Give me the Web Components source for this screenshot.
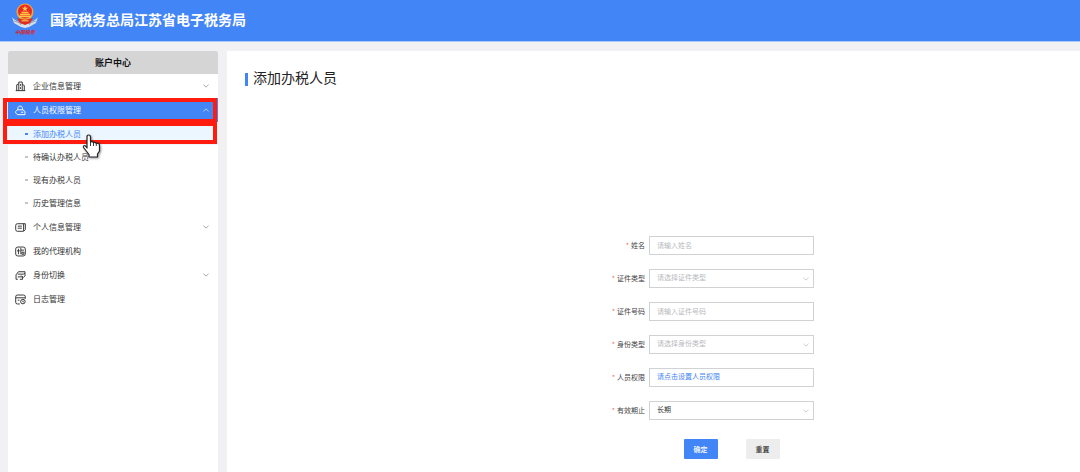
<!DOCTYPE html>
<html lang="zh-CN">
<head>
<meta charset="utf-8">
<title>国家税务总局江苏省电子税务局</title>
<style>
html, body { margin: 0; }
body { font-family: "Noto Sans CJK SC", sans-serif; font-size: 8px; color: #333; }
</style>
</head>
<body>
<tax-app></tax-app>
<script>
const define = (name, html, setup) => {
  const template = document.createElement('template');
  template.innerHTML = html;
  customElements.define(name, class extends HTMLElement {
    connectedCallback() {
      if (this.shadowRoot) return;
      const root = this.attachShadow({ mode: 'open' });
      root.append(template.content.cloneNode(true));
      if (setup) setup(this, root);
    }
  });
};

const icons = {
  building: '<path d="M2.500 14V5.500L5.500 4V1.500H10.500V14M5.500 4V14M1 14H15M10.500 5L13.500 6.500V14M8 4.500V7M8 9V11.500"/>',
  users: '<path d="M4 7V5.500C4 .3 11 .3 11 5.500V7M3.500 7H11.500L14.500 9.500V14H3.500L1 11.500V9.500ZM8.500 10.500H12"/>',
  card: '<path d="M3.500 2.500H15V11L12.500 13.500H3.500Q1 13.500 1 11V5Q1 2.500 3.500 2.500ZM12.500 2.500V13M4 6H10M4 9H10"/>',
  agency: '<rect x="1" y="1.500" width="14" height="13" rx="3"/><path d="M5 4V12M3 7H7M8.500 3V12M8.500 6H13M10 9H13V12H10Z"/>',
  swap: '<path d="M5 2.500H14.500V8.500L12 11M4 6H12M5 2.500L1.500 7V13.500H4M4 10H11V13.500H7M9 8L11.500 10.500M14.500 5L12 6"/>',
  log: '<path d="M7 14.500H3.500Q1 14.500 1 12V4Q1 1.500 3.500 1.500H12.500Q15 1.500 15 4V7M1.500 5.500H14.500M4 9H6.500"/><circle cx="11.500" cy="11" r="3.300"/><path d="M11.500 9.500V11.500H12.500"/>'
};

define('chevron-mark', `
<style>
:host { display: block; width: 6px; height: 4px; color: #999; pointer-events: none; }
:host([up]) { transform: rotate(180deg); }
svg { display: block; width: 100%; height: 100%; }
</style>
<svg viewBox="0 0 7 4" fill="none" stroke="currentColor" stroke-width="1"><path d="M.5.5 3.500 3.300 6.500.5"/></svg>`);

define('tax-logo', `
<style>
:host { display: block; width: 26px; }
svg { display: block; width: 26px; height: 25px; }
span { display: flex; justify-content: center; font-size: 5px; line-height: 7px; color: #d5262c; font-weight: 700; font-style: italic; white-space: nowrap; }
</style>
<svg viewBox="0 0 26 25">
  <path d="M0 14Q3 19 13 20Q23 19 26 14L24 20L17 24L13 25L9 24L2 20Z" fill="#d9dfe6"/>
  <path d="M2 18L10 20.500M24 18L16 20.500M4 16L9 22M22 16L17 22" stroke="#8397b5" stroke-width=".8"/>
  <circle cx="13" cy="9" r="8.500" fill="#efa63b"/>
  <circle cx="13" cy="8.500" r="7" fill="#e92b20"/>
  <path d="M13 2.500 13.800 4.800H16L14.200 6.200 14.900 8.500 13 7.100 11.100 8.500 11.800 6.200 10 4.800H12.200Z" fill="#ffd153"/>
  <path d="M8 11.500H18M9.500 9.500H16.500M7 13.500H19" stroke="#ffc545" stroke-width="1.300"/>
  <path d="M5 15 13 17 21 15 18 20 13 22 8 20Z" fill="#df2b20"/>
  <path d="M9.500 17.800H16.500" stroke="#f3bd4c" stroke-width="1.200"/>
</svg>
<span>中国税务</span>`);

define('app-header', `
<style>
:host { display: flex; align-items: center; gap: 12px; height: 42px; padding: 0 12px 3px; box-sizing: border-box; background: #4285f6; border-bottom: 1px solid #a9c8fb; }
h1 { margin: 0; font-size: 14px; line-height: 20px; font-weight: 700; color: #fff; }
</style>
<tax-logo></tax-logo><h1><slot></slot></h1>`);

define('menu-item', `
<style>
:host { display: block; }
a { display: flex; align-items: center; height: 24px; padding: 0 9px 0 7px; gap: 7px; color: #333; text-decoration: none; font-size: 8px; line-height: 12px; }
svg { width: 11px; height: 11px; fill: none; stroke: currentColor; stroke-width: 1.4; }
span { flex: 1; }
:host([open]) a { background: #4285f6; color: #fff; }
:host([open]) chevron-mark { color: #c9dcfc; }
</style>
<a href="#"><svg viewBox="0 0 16 16"></svg><span><slot></slot></span></a>`, (host, root) => {
  root.querySelector('svg').innerHTML = icons[host.getAttribute('icon')];
  if (host.hasAttribute('expandable')) {
    const mark = document.createElement('chevron-mark');
    mark.toggleAttribute('up', host.hasAttribute('open'));
    root.querySelector('a').append(mark);
  }
});

define('sub-item', `
<style>
:host { display: block; }
a { display: flex; align-items: center; height: 23px; padding-left: 17px; gap: 5px; color: #333; text-decoration: none; font-size: 8px; line-height: 12px; }
a::before { content: ""; width: 3px; height: 2px; background: #c4c4c4; }
:host([active]) a { background: #ebf6fe; color: #4285f6; }
:host([active]) a::before { background: #4285f6; }
</style>
<a href="#"><slot></slot></a>`);

define('hand-cursor', `
<style>
:host { display: block; width: 20px; height: 25px; filter: drop-shadow(1px 1px 1px #0006); }
svg { display: block; }
</style>
<svg width="20" height="25" viewBox="0 0 20 25"><path d="M5 14V3Q5 1 6.700 1Q8.500 1 8.500 3V8Q10 7 11.500 8.500Q13 7.800 14.300 9.300Q17.500 8.500 17.500 12V17L15.500 20V23H7V20.500L1.500 13.500Q1 11.500 3 11.500Z" fill="#fff" stroke="#222" stroke-width="1.200" stroke-linejoin="round"/><path d="M8.500 8V12M11.500 8.500V12M14.300 9.300V12" stroke="#222" stroke-width=".9"/></svg>`);

define('side-menu', `
<style>
:host { display: block; background: #fff; border-radius: 2px 2px 0 0; }
h2 { margin: 0; height: 23px; font-size: 9px; line-height: 24px; font-weight: 700; text-align: center; color: #111; background: #d5d5d5; border-radius: 2px 2px 0 0; }
.group { position: relative; }
.sub { padding-bottom: 1px; }
.mark { position: absolute; left: -5px; right: 1px; box-sizing: border-box; border: 4px solid #ff1c0e; pointer-events: none; }
.first { top: 0; height: 25px; }
.second { top: 24px; height: 22px; }
hand-cursor { position: absolute; left: 74px; top: 36px; }
</style>
<h2>账户中心</h2>
<nav aria-label="账户中心">
  <menu-item icon="building" expandable>企业信息管理</menu-item>
  <div class="group">
    <menu-item icon="users" expandable open>人员权限管理</menu-item>
    <div class="sub">
      <sub-item active>添加办税人员</sub-item>
      <sub-item>待确认办税人员</sub-item>
      <sub-item>现有办税人员</sub-item>
      <sub-item>历史管理信息</sub-item>
    </div>
    <div class="mark first"></div>
    <div class="mark second"></div>
    <hand-cursor></hand-cursor>
  </div>
  <menu-item icon="card" expandable>个人信息管理</menu-item>
  <menu-item icon="agency">我的代理机构</menu-item>
  <menu-item icon="swap" expandable>身份切换</menu-item>
  <menu-item icon="log">日志管理</menu-item>
</nav>`);

define('form-field', `
<style>
:host { display: grid; grid-template-columns: 152px 165px; gap: 4px; align-items: center; font-size: 7px; }
label { text-align: right; line-height: 12px; padding-bottom: 2px; color: #444; }
label::before { content: "*"; color: #f56c6c; margin-right: 2px; }
.box { display: grid; align-items: center; }
.box > * { grid-area: 1 / 1; }
input, select, button { appearance: none; box-sizing: border-box; width: 100%; height: 19px; margin: 0; padding: 0 7px 2px; border: 1px solid #d0d2d4; border-radius: 0; background: #fff; color: #333; font: inherit; line-height: 15px; text-align: left; outline: 0; }
input::placeholder { color: #b8babd; opacity: 1; }
select.empty { color: #b8babd; }
button { color: #4285f6; }
chevron-mark { justify-self: end; margin-right: 5px; color: #c0c4cc; }
</style>
<label for="control"></label><div class="box"></div>`, (host, root) => {
  const kind = host.getAttribute('kind');
  const text = host.getAttribute('text');
  root.querySelector('label').textContent = host.getAttribute('label');
  const control = document.createElement(kind);
  control.id = 'control';
  const box = root.querySelector('.box');
  box.append(control);
  if (kind === 'input') control.placeholder = text;
  else if (kind === 'button') { control.type = 'button'; control.textContent = text; }
  else {
    control.add(new Option(text));
    control.classList.toggle('empty', host.hasAttribute('empty'));
    box.append(document.createElement('chevron-mark'));
  }
});

define('action-button', `
<style>
:host { display: block; }
button { display: block; width: 34px; height: 20px; padding: 0; border: 0; border-radius: 1px; background: #ededed; color: #333; font: inherit; font-size: 7px; line-height: 20px; font-weight: 500; }
:host([primary]) button { background: #4285f6; color: #fff; }
</style>
<button type="button"><slot></slot></button>`);

define('staff-form', `
<style>
:host { display: block; }
form { display: flex; flex-direction: column; gap: 14px; width: fit-content; margin: 0 auto; }
.actions { display: flex; justify-content: center; gap: 28px; padding: 5px 0 0 156px; }
</style>
<form>
  <form-field kind="input" label="姓名" text="请输入姓名"></form-field>
  <form-field kind="select" empty label="证件类型" text="请选择证件类型"></form-field>
  <form-field kind="input" label="证件号码" text="请输入证件号码"></form-field>
  <form-field kind="select" empty label="身份类型" text="请选择身份类型"></form-field>
  <form-field kind="button" label="人员权限" text="请点击设置人员权限"></form-field>
  <form-field kind="select" label="有效期止" text="长期"></form-field>
  <div class="actions"><action-button primary>确定</action-button><action-button>重置</action-button></div>
</form>`);

define('content-panel', `
<style>
:host { display: block; background: #fff; padding: 16px 0 12px; }
h2 { display: flex; align-items: center; gap: 5px; margin: 0 0 149px 18px; font-size: 14px; line-height: 20px; font-weight: 400; color: #222; }
h2::before { content: ""; width: 3px; height: 13px; margin-top: 4px; background: #4285f6; }
</style>
<h2>添加办税人员</h2>
<slot></slot>`);

define('tax-app', `
<style>
:host { display: flex; flex-direction: column; min-height: 100vh; background: #f1f1f3; }
main { flex: 1; display: flex; gap: 9px; padding: 9px 0 0 8px; }
side-menu { flex: 0 0 210px; }
content-panel { flex: 1; min-width: 0; }
</style>
<app-header>国家税务总局江苏省电子税务局</app-header>
<main>
  <side-menu></side-menu>
  <content-panel><staff-form></staff-form></content-panel>
</main>`);
</script>
</body>
</html>
